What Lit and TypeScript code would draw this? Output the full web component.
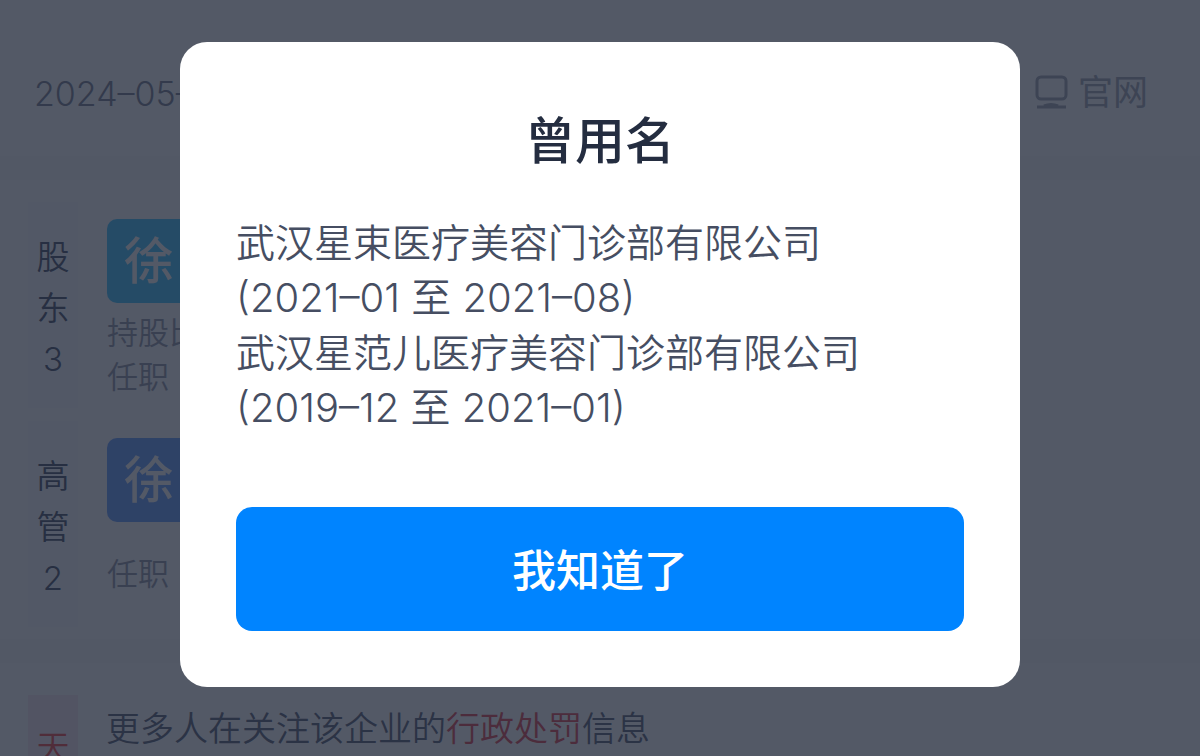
import { LitElement, html, css } from "lit";
import { customElement, property, state } from "lit/decorators.js";

interface FormerName {
  name: string;
  period: string;
}

@customElement("people-row")
export class PeopleRow extends LitElement {
  @property() label = "";
  @property({ type: Number }) count = 0;
  @property() tone = "teal";
  @property({ type: Array }) notes: string[] = [];

  static styles = css`
    :host {
      display: flex;
      gap: 12px;
      height: 206px;
    }
    .label {
      width: 50px;
      box-sizing: border-box;
      padding-top: 30px;
      background: #fbfbfc;
      color: #4a5068;
      display: flex;
      flex-direction: column;
      align-items: center;
      font-size: 33px;
      line-height: 51px;
    }
    .body {
      flex: 1;
      box-sizing: border-box;
      padding: 17px 17px 2px;
      background: #fcfcfd;
      display: flex;
      flex-direction: column;
      justify-content: space-between;
    }
    .avatar {
      width: 84px;
      height: 84px;
      border-radius: 10px;
      display: grid;
      place-items: center;
      color: #ffffff;
      font-size: 50px;
      font-weight: 500;
      line-height: 1;
    }
    .teal {
      background: #40c4ff;
    }
    .blue {
      background: #679dff;
    }
    .notes {
      flex: 1;
      display: flex;
      flex-direction: column;
      justify-content: center;
      color: #9498a8;
      font-size: 31px;
      line-height: 44px;
    }
  `;

  render() {
    return html`
      <div class="label">
        ${[...this.label].map((c) => html`<span>${c}</span>`)}
        <span>${this.count}</span>
      </div>
      <div class="body">
        <div class="avatar ${this.tone}">徐</div>
        <div class="notes">${this.notes.map((n) => html`<span>${n}</span>`)}</div>
      </div>
    `;
  }
}

@customElement("app-root")
export class AppRoot extends LitElement {
  @state() private open = true;

  private names: FormerName[] = [
    { name: "武汉星束医疗美容门诊部有限公司", period: "(2021–01 至 2021–08)" },
    { name: "武汉星范儿医疗美容门诊部有限公司", period: "(2019–12 至 2021–01)" },
  ];

  static styles = css`
    :host {
      display: block;
      height: 100vh;
      overflow: hidden;
      background: #ffffff;
      font-family: Inter, "Noto Sans CJK SC", sans-serif;
      font-weight: 350;
    }
    .card {
      height: 30px;
      margin: 0 33px;
      box-sizing: border-box;
      border: 20px solid #fcfcfd;
      border-top: 0;
    }
    .meta {
      display: flex;
      justify-content: space-between;
      align-items: center;
      height: 126px;
      padding: 0 52px 0 34px;
      color: #7a7f92;
      font-size: 34px;
    }
    .site {
      display: flex;
      align-items: center;
      gap: 10px;
      color: #a2a6b4;
      font-size: 35px;
      line-height: 44px;
      padding-bottom: 2px;
      font-weight: 400;
      text-decoration: none;
    }
    .site svg {
      width: 34px;
      height: 34px;
    }
    .divider {
      height: 24px;
      background: #fafafb;
    }
    .people {
      display: flex;
      flex-direction: column;
      gap: 13px;
      padding: 22px 28px 12px;
    }
    .notice {
      display: flex;
      gap: 28px;
      padding: 32px 28px 0;
      color: #5a6076;
      font-size: 34px;
      line-height: 68px;
    }
    .tag {
      width: 50px;
      height: 206px;
      box-sizing: border-box;
      padding-top: 27px;
      background: #f8ebf0;
      color: #f04848;
      font-size: 33px;
      line-height: 51px;
      text-align: center;
    }
    .risk {
      color: #e04450;
    }
    .mask {
      position: fixed;
      inset: 0;
      padding-top: 42px;
      background: rgba(29, 37, 54, 0.76);
      display: flex;
      justify-content: center;
      align-items: flex-start;
    }
    .dialog {
      width: 70%;
      box-sizing: border-box;
      padding: 62px 56px 56px;
      border-radius: 27px;
      background: #ffffff;
    }
    h2 {
      margin: 0;
      color: #242d40;
      font-size: 50px;
      font-weight: 500;
      line-height: 74px;
      text-align: center;
    }
    .names {
      margin: 37px 0 72px;
      color: #464e62;
      font-size: 39px;
      line-height: 55px;
    }
    .names p {
      margin: 0;
    }
    .names .period {
      font-size: 40px;
    }
    .confirm {
      display: block;
      width: 100%;
      height: 124px;
      padding: 0 0 2px;
      border: 0;
      border-radius: 16px;
      background: #0084ff;
      color: #ffffff;
      font-family: inherit;
      font-size: 44px;
      font-weight: 500;
      cursor: pointer;
    }
  `;

  render() {
    return html`
      <main>
        <div class="card"></div>
        <div class="meta">
          <span>2024–05–13</span>
          <a class="site" href="#">
            <svg viewBox="0 0 34 34" fill="none" stroke="currentColor" stroke-width="3" aria-hidden="true">
              <rect x="3" y="2" width="29" height="22" rx="4" />
              <path d="M3 32h29M10 31q7-3 14 0" />
            </svg>
            官网
          </a>
        </div>
        <div class="divider"></div>
        <div class="people">
          <people-row label="股东" .count=${3} tone="teal" .notes=${["持股比例", "任职"]}></people-row>
          <people-row label="高管" .count=${2} tone="blue" .notes=${["任职"]}></people-row>
        </div>
        <div class="divider"></div>
        <div class="notice">
          <div class="tag">天</div>
          <span>更多人在关注该企业的<span class="risk">行政处罚</span>信息</span>
        </div>
      </main>
      ${this.open
        ? html`<div class="mask">
            <section class="dialog" role="dialog" aria-modal="true" aria-labelledby="title">
              <h2 id="title">曾用名</h2>
              <div class="names">
                ${this.names.map((n) => html`<p>${n.name}</p><p class="period">${n.period}</p>`)}
              </div>
              <button class="confirm" @click=${() => (this.open = false)}>我知道了</button>
            </section>
          </div>`
        : null}
    `;
  }
}
